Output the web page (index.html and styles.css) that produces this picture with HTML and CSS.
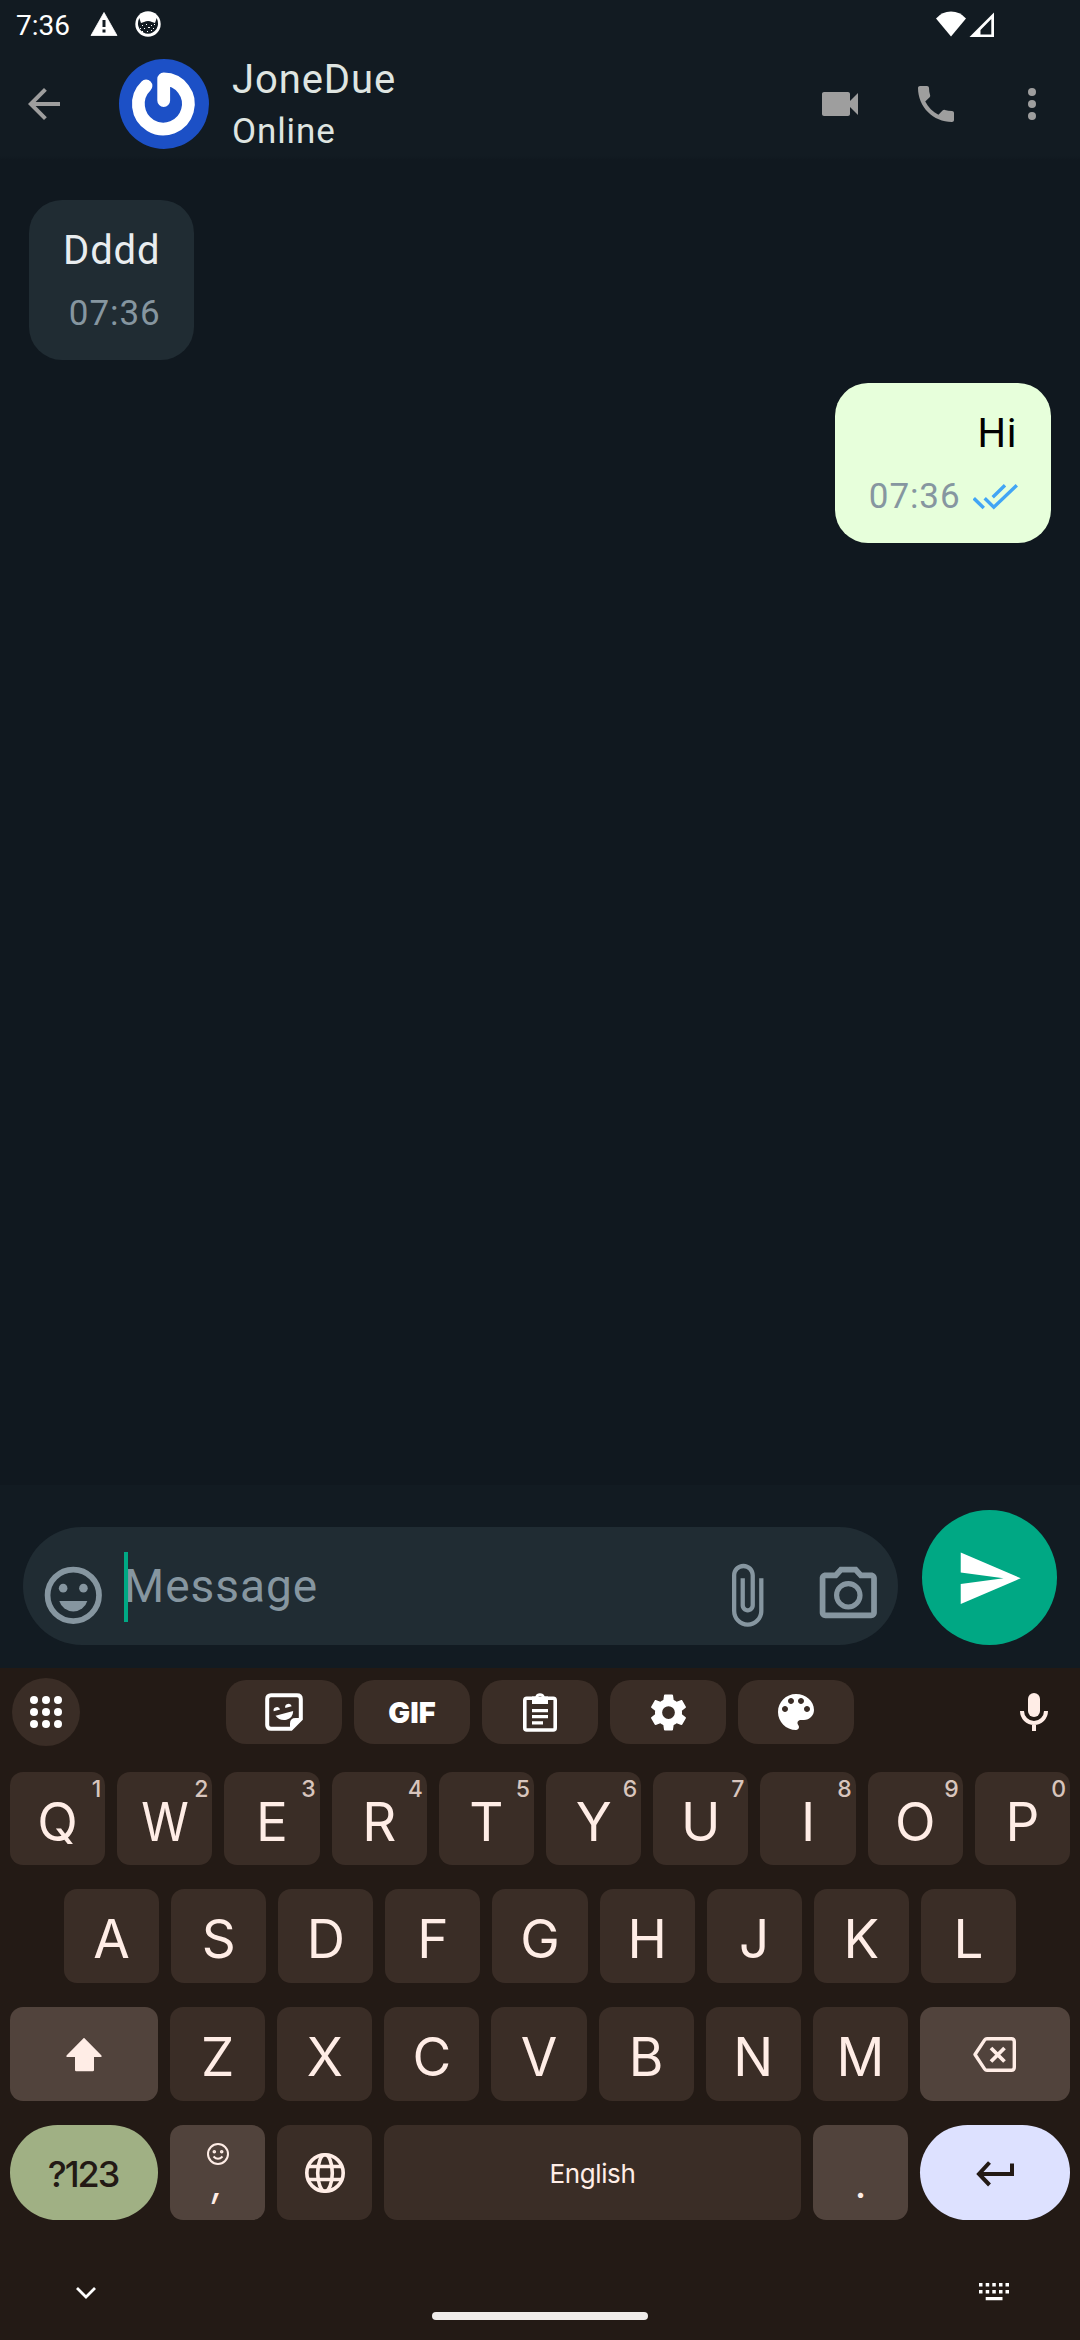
FILE: index.html
```html
<!DOCTYPE html>
<html lang="en">
<head>
<meta charset="utf-8">
<title>JoneDue</title>
<link rel="stylesheet" href="styles.css">
</head>
<body>
<div class="screen">
  <div class="status">
    <span class="clock">7:36</span>
    <svg class="status-alert" width="28" height="26" viewBox="0 0 28 26"><path d="M14 1.500L27 24.500H1z" fill="#fff" stroke="#fff" stroke-width=".8" stroke-linejoin="round"/><path d="M12.500 9h3v7h-3zM12.500 18.500h3v3h-3z" fill="#121b22"/></svg>
    <svg class="status-cat" width="26" height="26" viewBox="0 0 26 26"><circle cx="13" cy="13" r="12.700" fill="#fff"/><path d="M4.300 7L6 12 9 11Q13 9 17 11L20 12 21.700 7Q24.500 13 21.500 18 18 22.800 13 22.800T4.500 18Q1.500 13 4.300 7z" fill="#121b22"/><g fill="#fff"><path d="M7 14h1v1H7zM11 13h1v1h-1zM16 14h1v1h-1zM19 13h1v1h-1zM5 17h1v1H5zM9 17h1v1H9zM13 16h2v1h-2zM18 17h1v1h-1zM7 20h1v1H7zM12 20h1v1h-1zM16 19h1v1h-1z"/></g></svg>
    <svg class="status-wifi" width="30" height="26" viewBox="0 0 30 26"><path d="M15 25.500L0 7.500Q6 .5 15 .5T30 7.500z" fill="#fff"/></svg>
    <svg class="status-cell" width="26" height="26" viewBox="0 0 26 26"><path fill-rule="evenodd" d="M25 .5V25H.5zM22.300 7L11.500 18v4.500h10.800z" fill="#fff"/></svg>
  </div>

  <header class="header">
    <svg class="back" width="48" height="48" viewBox="0 0 24 24"><path d="M20 11H7.830l5.590-5.590L12 4l-8 8 8 8 1.410-1.410L7.830 13H20v-2z"/></svg>
    <svg class="avatar" width="90" height="90" viewBox="0 0 90 90"><circle cx="45" cy="45" r="45" fill="#1c50c6"/><path d="M44.700 41.500V20A25 25 0 1 1 27 27" fill="none" stroke="#fff" stroke-width="12.800" stroke-linecap="round" stroke-linejoin="round"/></svg>
    <div class="contact">
      <div class="contact-name">JoneDue</div>
      <div class="contact-state">Online</div>
    </div>
    <div class="actions">
      <svg width="48" height="48" viewBox="0 0 24 24"><path d="M17 10.500V7c0-.55-.45-1-1-1H4c-.55 0-1 .45-1 1v10c0 .55.45 1 1 1h12c.55 0 1-.45 1-1v-3.500l4 4v-11l-4 4z"/></svg>
      <svg width="48" height="48" viewBox="0 0 24 24"><path d="M6.620 10.790c1.440 2.830 3.760 5.140 6.590 6.590l2.200-2.200c.27-.27.67-.36 1.020-.24 1.120.37 2.330.57 3.570.57.55 0 1 .45 1 1V20c0 .55-.45 1-1 1-9.390 0-17-7.610-17-17 0-.55.45-1 1-1h3.500c.55 0 1 .45 1 1 0 1.250.2 2.450.57 3.570.11.35.03.74-.25 1.020l-2.200 2.200z"/></svg>
      <svg width="48" height="48" viewBox="0 0 24 24"><circle cx="12" cy="6" r="2"/><circle cx="12" cy="12" r="2"/><circle cx="12" cy="18" r="2"/></svg>
    </div>
  </header>

  <main class="chat">
    <div class="bubble">
      <div class="text">Dddd</div>
      <div class="meta"><span>07:36</span></div>
    </div>
    <div class="bubble bubble-own">
      <div class="text">Hi</div>
      <div class="meta"><span>07:36</span><svg width="45" height="26" viewBox="0 0 45 26" fill="none" stroke="#42a5f5" stroke-width="3.400"><path d="M.8 14.300L10.800 24M11.700 14.300L20.800 23.200 43.800 1.300M19.700 13.300L32 1.300"/></svg></div>
    </div>
  </main>

  <div class="composer">
    <div class="field">
      <svg width="68.600" height="68.600" viewBox="0 0 24 24"><circle cx="12" cy="12" r="9" fill="none" stroke="#8696a0" stroke-width="2"/><circle cx="8.450" cy="9.500" r="1.500"/><circle cx="15.550" cy="9.500" r="1.500"/><path d="M7.100 14h9.800a5.100 5.100 0 0 1-9.800 0z"/></svg>
      <div class="placeholder">Message<i class="caret"></i></div>
      <svg class="clip" width="68.600" height="68.600" viewBox="0 0 24 24"><path d="M16.500 6v11.500c0 2.210-1.790 4-4 4s-4-1.790-4-4V5c0-1.380 1.120-2.500 2.500-2.500s2.500 1.120 2.500 2.500v10.500c0 .55-.45 1-1 1s-1-.45-1-1V6H10v9.500c0 1.380 1.120 2.500 2.500 2.500s2.500-1.120 2.500-2.500V5c0-2.210-1.790-4-4-4S7 2.790 7 5v12.500c0 3.040 2.460 5.500 5.500 5.500s5.500-2.460 5.500-5.500V6h-1.500z"/></svg>
      <svg width="68.600" height="68.600" viewBox="0 0 24 24"><path fill-rule="evenodd" d="M20 4h-3.170L15 2H9L7.170 4H4c-1.100 0-2 .9-2 2v12c0 1.100.9 2 2 2h16c1.100 0 2-.9 2-2V6c0-1.100-.9-2-2-2zm0 14H4V6h4.050l1.830-2h4.240l1.830 2H20v12zM12 7c-2.760 0-5 2.240-5 5s2.240 5 5 5 5-2.240 5-5-2.240-5-5-5zm0 8.200a3.200 3.200 0 1 1 0-6.400 3.200 3.200 0 0 1 0 6.400z"/></svg>
    </div>
    <div class="send"><svg width="68.600" height="68.600" viewBox="0 0 24 24"><path d="M2.010 21L23 12 2.010 3 2 10l15 2-15 2z" fill="#fff"/></svg></div>
  </div>

  <div class="keyboard">
    <div class="toolbar">
      <div class="apps"><svg width="34" height="34" viewBox="0 0 34 34" fill="#fff"><circle cx="5" cy="5" r="4"/><circle cx="17" cy="5" r="4"/><circle cx="29" cy="5" r="4"/><circle cx="5" cy="17" r="4"/><circle cx="17" cy="17" r="4"/><circle cx="29" cy="17" r="4"/><circle cx="5" cy="29" r="4"/><circle cx="17" cy="29" r="4"/><circle cx="29" cy="29" r="4"/></svg></div>
      <div class="chips">
        <div class="chip"><svg width="38" height="38" viewBox="0 0 38 38"><path d="M6 2.200h26q3.800 0 3.800 3.800v20L26 35.800H6Q2.200 35.800 2.200 32V6Q2.200 2.200 6 2.200z" fill="none" stroke="#fff" stroke-width="4"/><path d="M25 37v-6.500q0-5.500 5.500-5.500H37zM8.700 18.200a3.300 3.300 0 1 1 6.400-1.700zM20.300 15a3.300 3.300 0 1 1 6.400-1.700zM10.500 22.700L28.200 18Q28 25 21.500 26.700 14.500 28 10.500 22.700z" fill="#fff"/></svg></div>
        <div class="chip gif">GIF</div>
        <div class="chip"><svg width="34" height="40" viewBox="0 0 34 40"><rect x="1.800" y="6.300" width="30.400" height="31.700" rx="2" fill="none" stroke="#fff" stroke-width="3.600"/><path fill-rule="evenodd" d="M9 4.500h3.300a5 5 0 0 1 9.400 0H25V12H9zM17 4a2 2 0 1 0 0 4 2 2 0 0 0 0-4z" fill="#fff"/><path d="M9 17h16v3.300H9zM9 23h16v3.300H9zM9 29.200h11v3.300H9z" fill="#fff"/></svg></div>
        <div class="chip"><svg width="45" height="45" viewBox="0 0 24 24"><path fill="#fff" d="M19.140 12.940c.04-.3.060-.61.060-.94 0-.32-.02-.64-.07-.94l2.030-1.580c.18-.14.23-.41.12-.61l-1.920-3.320c-.12-.22-.37-.29-.59-.22l-2.390.96c-.5-.38-1.030-.7-1.620-.94L14.400 2.810c-.04-.24-.24-.41-.48-.41h-3.840c-.24 0-.43.17-.47.41L9.250 5.350C8.660 5.590 8.120 5.920 7.630 6.290L5.240 5.330c-.22-.08-.47 0-.59.22L2.740 8.870C2.620 9.080 2.660 9.340 2.860 9.480l2.030 1.580C4.840 11.360 4.800 11.690 4.800 12s.02.640.070.940l-2.030 1.580c-.18.14-.23.41-.12.61l1.920 3.320c.12.22.37.29.59.22l2.390-.96c.5.38 1.030.7 1.620.94l.36 2.540c.05.24.24.41.48.41h3.840c.24 0 .44-.17.47-.41l.36-2.540c.59-.24 1.130-.56 1.620-.94l2.390.96c.22.08.47 0 .59-.22l1.920-3.320c.12-.22.07-.47-.12-.61L19.140 12.940zM12 15.400a3.400 3.400 0 1 1 0-6.800 3.400 3.400 0 0 1 0 6.800z"/></svg></div>
        <div class="chip"><svg width="48" height="48" viewBox="0 0 24 24"><path fill="#fff" d="M12 3c-4.970 0-9 4.030-9 9s4.030 9 9 9c.83 0 1.500-.67 1.500-1.500 0-.39-.15-.74-.39-1.010-.23-.26-.38-.61-.38-.99 0-.83.67-1.500 1.500-1.500H16c2.760 0 5-2.240 5-5 0-4.420-4.030-8-9-8zm-5.500 9c-.83 0-1.500-.67-1.500-1.500S5.670 9 6.500 9 8 9.670 8 10.500 7.330 12 6.500 12zm3-4C8.670 8 8 7.330 8 6.500S8.670 5 9.500 5s1.500.67 1.500 1.500S10.330 8 9.500 8zm5 0c-.83 0-1.500-.67-1.500-1.500S13.670 5 14.500 5s1.500.67 1.500 1.500S15.330 8 14.500 8zm3 4c-.83 0-1.500-.67-1.500-1.500S16.670 9 17.500 9s1.500.67 1.500 1.500-.67 1.500-1.500 1.500z"/></svg></div>
      </div>
      <svg class="mic" width="28" height="38" viewBox="0 0 28 38"><rect x="8" y="0" width="12" height="24" rx="6" fill="#ffede6"/><path d="M2 18a12 12 0 0 0 24 0M14 30v8" fill="none" stroke="#ffede6" stroke-width="4"/></svg>
    </div>

    <div class="row row-top">
      <div class="key">Q<sup class="hint">1</sup></div>
      <div class="key"><span class="narrow">W</span><sup class="hint">2</sup></div>
      <div class="key">E<sup class="hint">3</sup></div>
      <div class="key">R<sup class="hint">4</sup></div>
      <div class="key">T<sup class="hint">5</sup></div>
      <div class="key">Y<sup class="hint">6</sup></div>
      <div class="key">U<sup class="hint">7</sup></div>
      <div class="key">I<sup class="hint">8</sup></div>
      <div class="key">O<sup class="hint">9</sup></div>
      <div class="key">P<sup class="hint">0</sup></div>
    </div>
    <div class="row row-home">
      <div class="key">A</div><div class="key">S</div><div class="key">D</div><div class="key">F</div><div class="key">G</div><div class="key">H</div><div class="key">J</div><div class="key">K</div><div class="key">L</div>
    </div>
    <div class="row">
      <div class="key key-mod key-left"><svg width="36" height="35" viewBox="0 0 36 35"><path d="M18 .8L35.500 18.500V20H28v13q0 1.300-1.300 1.300H10.300Q9 34.300 9 33V20H.5v-1.500z" fill="#ffede6"/></svg></div>
      <div class="key">Z</div><div class="key">X</div><div class="key">C</div><div class="key">V</div><div class="key">B</div><div class="key">N</div><div class="key">M</div>
      <div class="key key-mod key-right"><svg width="43" height="35" viewBox="0 0 43 35" fill="none" stroke="#ffede6" stroke-width="3.400"><path d="M14 1.700h24.300q3 0 3 3v25.600q0 3-3 3H14q-1.500 0-2.300-1.200L2 17.500l9.700-14.600Q12.500 1.700 14 1.700z" stroke-linejoin="round"/><path d="M18 11l13.500 13.500M31.500 11L18 24.500" stroke-width="3.800"/></svg></div>
    </div>
    <div class="row row-bottom">
      <div class="key key-symbols key-left">?123</div>
      <div class="key key-mod key-comma">
        <svg width="24" height="24" viewBox="0 0 24 24" fill="none" stroke="#ffede6" stroke-width="2"><circle cx="12" cy="12" r="10"/><path d="M7.500 14.500q4.500 4.500 9 0"/><circle cx="8.300" cy="9.800" r=".8"/><circle cx="15.700" cy="9.800" r=".8"/></svg>
        <span>,</span>
      </div>
      <div class="key"><svg width="42" height="42" viewBox="0 0 42 42" fill="none" stroke="#ffede6" stroke-width="3.600"><circle cx="21" cy="21" r="18.200"/><ellipse cx="21" cy="21" rx="7.300" ry="18.200"/><path d="M4 14.500h34M4 27.500h34"/></svg></div>
      <div class="key key-space">English</div>
      <div class="key key-mod key-dot"><span>.</span></div>
      <div class="key key-enter key-right"><svg width="38" height="26" viewBox="0 0 38 26" fill="none" stroke="#231a15" stroke-width="4"><path d="M13.500 1.500L3 13l10.500 11M3 13h33V2.500"/></svg></div>
    </div>

    <div class="nav">
      <svg class="nav-hide" width="20" height="14" viewBox="0 0 20 14"><path d="M1 2l9 9 9-9" fill="none" stroke="#fff" stroke-width="2.800"/></svg>
      <div class="nav-pill"></div>
      <svg class="nav-switch" width="30" height="18" viewBox="0 0 30 18" fill="#fff"><path d="M0 0h3.500v3.500H0zM6.700 0h3.500v3.500H6.700zM13.300 0h3.500v3.500h-3.500zM20 0h3.500v3.500H20zM26.500 0H30v3.500h-3.500zM0 7h3.500v3.500H0zM6.700 7h3.500v3.500H6.700zM13.300 7h3.500v3.500h-3.500zM20 7h3.500v3.500H20zM26.500 7H30v3.500h-3.500zM6.700 14h16.800v3.200H6.700z"/></svg>
    </div>
  </div>
</div>
</body>
</html>
```
FILE: styles.css
```css
* { box-sizing: border-box; }
body { margin: 0; background: #10181f; }
svg { display: block; flex: none; }

.screen {
  width: 1080px;
  height: 2340px;
  display: flex;
  flex-direction: column;
  overflow: hidden;
  font-family: Roboto, "Liberation Sans", sans-serif;
  letter-spacing: .9px;
}

/* status bar */
.status {
  height: 48px;
  display: flex;
  align-items: center;
  padding: 0 85px 0 16px;
  background: #121b22;
}
.clock { font-size: 28px; line-height: 48px; letter-spacing: 0; color: #fff; padding-top: 3px; width: 74px; }
.status-cat { margin-left: 17px; }
.status-wifi { margin-left: auto; }
.status-cell { margin: 2px 0 0 3px; }

/* conversation header */
.header {
  height: 112px;
  display: flex;
  align-items: center;
  padding: 0 24px 0 20px;
  background: linear-gradient(#121b22 108px, #10181f);
  fill: #9e9e9e;
}
.avatar { margin-left: 51px; }
.contact { margin-left: 23px; padding-top: 4px; color: #dfe5e1; }
.contact-name { font-size: 40px; line-height: 50px; }
.contact-state { font-size: 35px; line-height: 50px; margin-top: 2px; }
.actions { margin-left: auto; display: flex; gap: 48px; }

/* messages */
.chat {
  flex: 1;
  display: flex;
  flex-direction: column;
  align-items: flex-start;
  gap: 23px;
  padding: 40px 29px;
  background: #10181f;
}
.bubble {
  height: 160px;
  padding: 23px 33.500px 21px 34px;
  border-radius: 33px;
  background: #202c33;
  color: #e9edef;
  text-align: right;
}
.bubble-own { align-self: flex-end; background: #e7ffdb; color: #000; }
.text { font-size: 40px; line-height: 56px; }
.meta {
  display: flex;
  justify-content: flex-end;
  align-items: center;
  gap: 12px;
  margin-top: 10px;
  font-size: 35px;
  line-height: 50px;
  color: #8696a0;
}

/* message composer */
.composer {
  height: 183px;
  display: flex;
  align-items: flex-end;
  gap: 24px;
  padding: 0 23px 23px;
  background: #121b22;
}
.field {
  flex: 1;
  height: 118px;
  display: flex;
  align-items: center;
  padding: 0 15.700px 0 16.200px;
  border-radius: 59px;
  background: #202c33;
  fill: #8696a0;
}
.field svg { margin-top: 19px; }
.field .clip { margin-right: 33px; }
.placeholder {
  position: relative;
  flex: 1;
  margin-left: 16.200px;
  font-size: 46px;
  line-height: 68px;
  letter-spacing: 1px;
  color: #8696a0;
}
.caret { position: absolute; left: 0; top: 0; width: 4px; height: 70px; background: #00a884; }
.send {
  width: 135px;
  height: 135px;
  border-radius: 50%;
  display: flex;
  align-items: center;
  justify-content: center;
  background: #00a884;
}
.send svg { margin-top: 2px; }

/* on-screen keyboard */
.keyboard {
  height: 672px;
  display: flex;
  flex-direction: column;
  padding: 10px 10px 0;
  background: #231a15;
  font-family: Inter, Roboto, sans-serif;
  letter-spacing: 0;
  color: #ffede6;
}
.toolbar { display: flex; align-items: center; height: 68px; padding: 0 22px 0 2px; margin-bottom: 26px; }
.apps {
  width: 68px;
  height: 68px;
  border-radius: 50%;
  display: flex;
  align-items: center;
  justify-content: center;
  background: #3a2d26;
}
.chips { display: flex; gap: 12px; margin-left: 146px; }
.chip {
  width: 116px;
  height: 64px;
  border-radius: 20px;
  display: flex;
  align-items: center;
  justify-content: center;
  background: #3a2d26;
}
.gif { font-size: 29px; font-weight: 900; color: #fff; }
.mic { margin-left: auto; }

.row { display: flex; gap: 12px; height: 94px; margin-bottom: 24px; }
.row-top { height: 93px; }
.row-home { padding: 0 54px; }
.row-bottom { height: 95px; margin-bottom: 0; }
.key {
  position: relative;
  flex: 1;
  display: flex;
  align-items: center;
  justify-content: center;
  padding-top: 6px;
  border-radius: 13px;
  background: #3a2d26;
  font-size: 53px;
  line-height: 60px;
}
.narrow { transform: scaleX(.91); }
.hint {
  position: absolute;
  right: 4px;
  top: 5px;
  font-size: 23px;
  line-height: 24px;
  font-weight: 500;
  color: #d8c5bd;
}
.key-mod { background: #51433c; }
.key-left { flex: 0 0 148px; }
.key-right { flex: 0 0 150px; }
.key svg { margin-top: -6px; }
.key-symbols {
  padding: 2px 2px 0 0;
  border-radius: 48px;
  background: #a0b084;
  color: #231a15;
  font-size: 36px;
  font-weight: 500;
  letter-spacing: -2px;
}
.key-comma { flex-direction: column; justify-content: flex-start; padding-top: 17px; }
.key-comma svg { margin: 0; }
.key-comma span, .key-dot span { font-size: 40px; line-height: 40px; }
.key-comma span { margin-top: -3px; transform: skewX(-8deg); }
.key-dot { align-items: flex-end; padding-bottom: 16px; }
.key-space { flex: 0 0 417px; padding-top: 2px; font-size: 26px; letter-spacing: -.4px; }
.key-enter { border-radius: 48px; background: #dde1ff; }
.key-enter svg { margin-top: -3px; }

/* system navigation strip */
.nav { flex: 1; display: flex; align-items: center; padding: 0 61px 0 66px; }
.nav-hide { margin-top: 25px; }
.nav-pill { width: 216px; height: 8px; margin: 72px auto 0 336px; border-radius: 4px; background: #f0ecea; }
.nav-switch { margin-top: 24px; }
```
